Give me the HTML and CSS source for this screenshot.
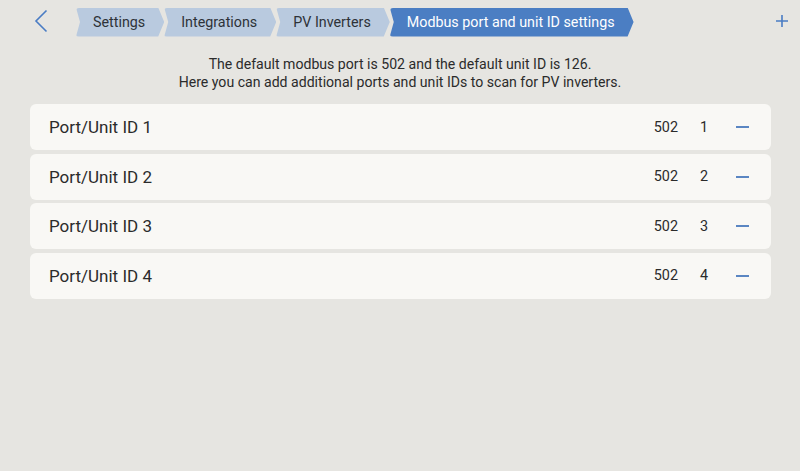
FILE: index.html
```html
<!DOCTYPE html>
<html lang="en">

<head>
    <meta charset="UTF-8">
    <meta name="viewport" content="width=device-width, initial-scale=1.0">
    <title>Modbus port and unit ID settings</title>
    <link rel="stylesheet" href="styles.css">
</head>

<body>
    <header class="topbar">
        <button class="back" aria-label="Back">
            <svg width="14" height="24" viewBox="0 0 14 24">
                <path d="M12.5 1.5 L2 12 L12.5 22.5" fill="none" stroke="#4a7cc4" stroke-width="1.6" />
            </svg>
        </button>
        <nav class="crumbs">
            <span class="crumb">Settings</span>
            <span class="crumb">Integrations</span>
            <span class="crumb">PV Inverters</span>
            <span class="crumb active">Modbus port and unit ID settings</span>
        </nav>
        <button class="add" aria-label="Add">
            <svg width="14" height="14" viewBox="0 0 14 14">
                <path d="M7 1 V13 M1 7 H13" fill="none" stroke="#4a7cc4" stroke-width="1.6" />
            </svg>
        </button>
    </header>

    <p class="intro">
        The default modbus port is 502 and the default unit ID is 126.<br>
        Here you can add additional ports and unit IDs to scan for PV inverters.
    </p>

    <ul class="ports">
        <li class="port">
            <span class="label">Port/Unit ID 1</span>
            <span class="num">502</span>
            <span class="unit">1</span>
            <span class="remove"></span>
        </li>
        <li class="port">
            <span class="label">Port/Unit ID 2</span>
            <span class="num">502</span>
            <span class="unit">2</span>
            <span class="remove"></span>
        </li>
        <li class="port">
            <span class="label">Port/Unit ID 3</span>
            <span class="num">502</span>
            <span class="unit">3</span>
            <span class="remove"></span>
        </li>
        <li class="port">
            <span class="label">Port/Unit ID 4</span>
            <span class="num">502</span>
            <span class="unit">4</span>
            <span class="remove"></span>
        </li>
    </ul>
</body>

</html>
```

FILE: styles.css
```css
*,
::before,
::after {
    box-sizing: border-box;
    margin: 0;
    padding: 0;
}

body {
    background: #e6e5e1;
    font-family: Roboto, "Liberation Sans", sans-serif;
    color: #2b2b2b;
    height: 471px;
}

.topbar {
    height: 44px;
    display: flex;
    align-items: center;
    padding: 0 11px 0 34px;
}

.topbar button {
    background: none;
    border: none;
    display: flex;
}

.back {
    margin-right: 28px;
    margin-top: -2px;
}

.crumbs {
    display: flex;
    flex: 1;
}

.crumb {
    height: 29px;
    line-height: 29px;
    font-size: 14.3px;
    padding: 0 19px 0 17px;
    background: #b9cadf;
    color: #2e3238;
    clip-path: polygon(0 0, calc(100% - 6px) 0, 100% 50%, calc(100% - 6px) 100%, 0 100%, 4px 50%);
    border-radius: 3px;
}

.crumb.active {
    background: #4b7ec3;
    color: #fff;
}

.add {
    margin-top: -3px;
}

.intro {
    margin-top: 11px;
    text-align: center;
    font-size: 14.1px;
    line-height: 18px;
    color: #2b2b2b;
}

.ports {
    list-style: none;
    margin: 13px 29px 0 30px;
    display: flex;
    flex-direction: column;
    gap: 3.5px;
}

.port {
    height: 46px;
    background: #f9f8f5;
    border-radius: 6px;
    display: flex;
    align-items: center;
    padding: 0 22px 0 19px;
}

.label {
    flex: 1;
    font-size: 17px;
}

.num,
.unit {
    font-size: 14.4px;
}

.unit {
    width: 28px;
    margin-left: 22px;
}

.remove {
    width: 13px;
    height: 2px;
    background: #5b86c2;
    margin-left: 8px;
}
```
